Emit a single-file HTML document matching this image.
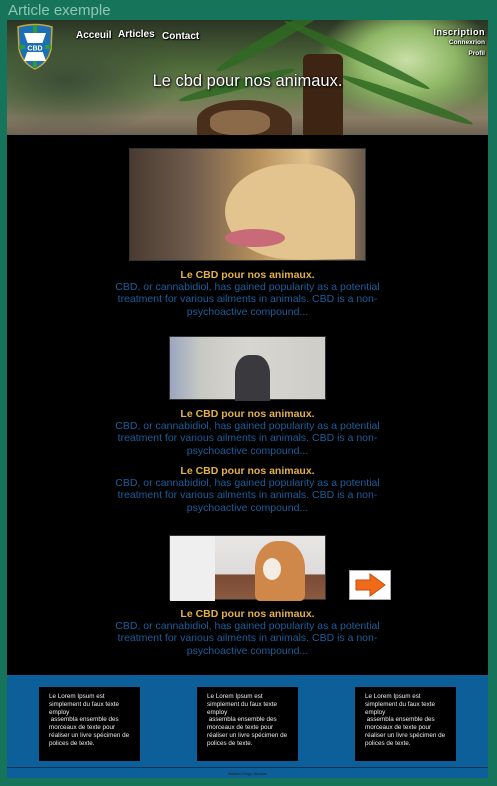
<!DOCTYPE html>
<html><head><meta charset="utf-8">
<style>
*{margin:0;padding:0;box-sizing:border-box}
body{width:497px;height:786px;background:#16745a;font-family:"Liberation Sans",sans-serif;position:relative;overflow:hidden}
.t{position:absolute;left:8px;top:2px;color:#8fc7b0;font-size:15px}
.hdr{position:absolute;left:7px;top:20px;width:481px;height:115px;overflow:hidden;
background:radial-gradient(ellipse 120px 80px at 400px 40px,#c9dfa6 0%,#8fb866 40%,transparent 75%),
radial-gradient(ellipse 140px 70px at 60px 60px,#3c4d36,transparent 80%),
linear-gradient(180deg,#2a3424 0%,#4f6a3a 40%,#6a7f4e 65%,#8a7e66 85%,#6e6252 100%)}
.leaf{position:absolute;background:#2f6a22;border-radius:50%;opacity:.85}
.nav{position:absolute;top:10px;color:#fff;font-weight:bold;font-size:10px;text-shadow:0 0 2px #000,1px 1px 1px #000}
.r{position:absolute;right:3px;color:#fff;font-weight:bold;text-align:right;text-shadow:0 0 2px #000,1px 1px 1px #000}
.h1{position:absolute;left:0;width:481px;text-align:center;top:52px;color:#fff;font-size:16.5px;text-shadow:0 0 2px #000,1px 1px 2px #000}
.main{position:absolute;left:7px;top:135px;width:481px;height:540px;background:#000}
.img{position:absolute;border:1px solid #333}
.tt{position:absolute;left:0;width:481px;text-align:center;color:#e3b04b;font-weight:bold;font-size:10.5px}
.bd{position:absolute;left:100px;width:281px;text-align:center;color:#1b5e9c;font-size:10.5px;line-height:12.3px}
.foot{position:absolute;left:7px;top:675px;width:481px;height:103px;background:#0c5f99}
.box{position:absolute;top:12px;width:101px;height:74px;background:#000;color:#eee;font-size:6.3px;line-height:7.8px;padding:6px 10px}
.line{position:absolute;left:0;top:92px;width:481px;height:1px;background:#0a3557}
.cr{position:absolute;top:96px;width:481px;text-align:center;font-size:4px;color:#222}
</style></head><body>
<div class="t">Article exemple</div>
<div class="hdr">
 <div class="leaf" style="left:200px;top:10px;width:140px;height:12px;transform:rotate(-30deg)"></div>
 <div class="leaf" style="left:270px;top:30px;width:160px;height:10px;transform:rotate(25deg)"></div>
 <div class="leaf" style="left:170px;top:60px;width:120px;height:10px;transform:rotate(-15deg)"></div>
 <div class="leaf" style="left:330px;top:75px;width:140px;height:10px;transform:rotate(20deg)"></div>
 <div style="position:absolute;left:190px;top:80px;width:95px;height:40px;border-radius:50% 50% 0 0;background:#4a2e1c"></div>
 <div style="position:absolute;left:203px;top:90px;width:60px;height:25px;border-radius:40%;background:#8a6a48"></div>
 <div style="position:absolute;left:296px;top:34px;width:40px;height:85px;border-radius:6px 6px 0 0;background:#3e2412"></div>
 <svg style="position:absolute;left:8px;top:3px" width="40" height="48" viewBox="0 0 40 48">
  <path d="M3 4 Q20 -1 37 4 L36 26 Q33 40 20 46 Q7 40 4 26 Z" fill="#1a6fb5" stroke="#c9a63a" stroke-width="1.5"/>
  <rect x="18" y="2" width="4" height="43" fill="#2e9a3a"/><rect x="4" y="22" width="32" height="4" fill="#2e9a3a"/>
  <path d="M9 10 L31 10 L26 24 L31 38 L9 38 L14 24 Z" fill="#fff"/>
  <rect x="10" y="20" width="20" height="9" fill="#1a6fb5"/>
  <text x="20" y="27.5" font-size="7" font-weight="bold" fill="#fff" text-anchor="middle" font-family="Liberation Sans">CBD</text>
 </svg>
 <div class="nav" style="left:69px">Acceuil</div>
 <div class="nav" style="left:111px;top:9px">Articles</div>
 <div class="nav" style="left:155px;top:11px">Contact</div>
 <div class="r" style="top:7px;font-size:9px;letter-spacing:.5px">Inscription</div>
 <div class="r" style="top:19px;font-size:6.5px">Connexrion</div>
 <div class="r" style="top:30px;font-size:6.5px">Profil</div>
 <div class="h1">Le cbd pour nos animaux.</div>
</div>
<div class="main">
 <div class="img" style="left:122px;top:13px;width:237px;height:113px;background:linear-gradient(90deg,#4a3a30 0%,#6d5a4c 25%,#b8925c 55%,#e0c08a 75%,#6a5a4c 100%)">
  <div style="position:absolute;left:95px;top:15px;width:130px;height:95px;border-radius:50% 40% 0 50%;background:#e3c48e"></div>
  <div style="position:absolute;left:95px;top:80px;width:60px;height:18px;border-radius:50%;background:#c96a78"></div>
 </div>
 <div class="tt" style="top:134px">Le CBD pour nos animaux.</div>
 <div class="bd" style="top:146px">CBD, or cannabidiol, has gained popularity as a potential treatment for various ailments in animals. CBD is a non-psychoactive compound...</div>
 <div class="img" style="left:162px;top:201px;width:157px;height:64px;background:linear-gradient(90deg,#9aa6c0 0%,#c9c9c3 20%,#d8d6d0 50%,#cfcdc7 100%)">
  <div style="position:absolute;left:65px;top:18px;width:35px;height:46px;border-radius:40% 40% 0 0;background:#3a3a3e"></div>
 </div>
 <div class="tt" style="top:273px">Le CBD pour nos animaux.</div>
 <div class="bd" style="top:285px">CBD, or cannabidiol, has gained popularity as a potential treatment for various ailments in animals. CBD is a non-psychoactive compound...</div>
 <div class="tt" style="top:330px">Le CBD pour nos animaux.</div>
 <div class="bd" style="top:342px">CBD, or cannabidiol, has gained popularity as a potential treatment for various ailments in animals. CBD is a non-psychoactive compound...</div>
 <div class="img" style="left:162px;top:400px;width:157px;height:65px;background:linear-gradient(180deg,#e8e6e4 0%,#dedcda 60%,#7a4a34 62%,#8a5a40 100%)">
  <div style="position:absolute;left:0;top:0;width:45px;height:65px;background:#efefef"></div>
  <div style="position:absolute;left:85px;top:5px;width:50px;height:60px;border-radius:45% 45% 10% 10%;background:#d0884a"></div>
  <div style="position:absolute;left:93px;top:22px;width:18px;height:22px;border-radius:50%;background:#f3ece2"></div>
 </div>
 <div style="position:absolute;left:342px;top:435px;width:42px;height:30px;background:#fff;border:1px solid #aaa">
  <svg width="40" height="28" viewBox="0 0 40 28"><path d="M6 9 H20 V3 L35 14 L20 25 V19 H6 Z" fill="#f06a1a" stroke="#c84a0a" stroke-width="1"/></svg>
 </div>
 <div class="tt" style="top:473px">Le CBD pour nos animaux.</div>
 <div class="bd" style="top:485px">CBD, or cannabidiol, has gained popularity as a potential treatment for various ailments in animals. CBD is a non-psychoactive compound...</div>
</div>
<div class="foot">
 <div class="box" style="left:32px">Le Lorem Ipsum est simplement du faux texte employ<br>&nbsp;assembla ensemble des morceaux de texte pour réaliser un livre spécimen de polices de texte.</div>
 <div class="box" style="left:190px">Le Lorem Ipsum est simplement du faux texte employ<br>&nbsp;assembla ensemble des morceaux de texte pour réaliser un livre spécimen de polices de texte.</div>
 <div class="box" style="left:348px">Le Lorem Ipsum est simplement du faux texte employ<br>&nbsp;assembla ensemble des morceaux de texte pour réaliser un livre spécimen de polices de texte.</div>
 <div class="line"></div>
 <div class="cr">Bastien,Hugo,Nicolas</div>
</div>
</body></html>
